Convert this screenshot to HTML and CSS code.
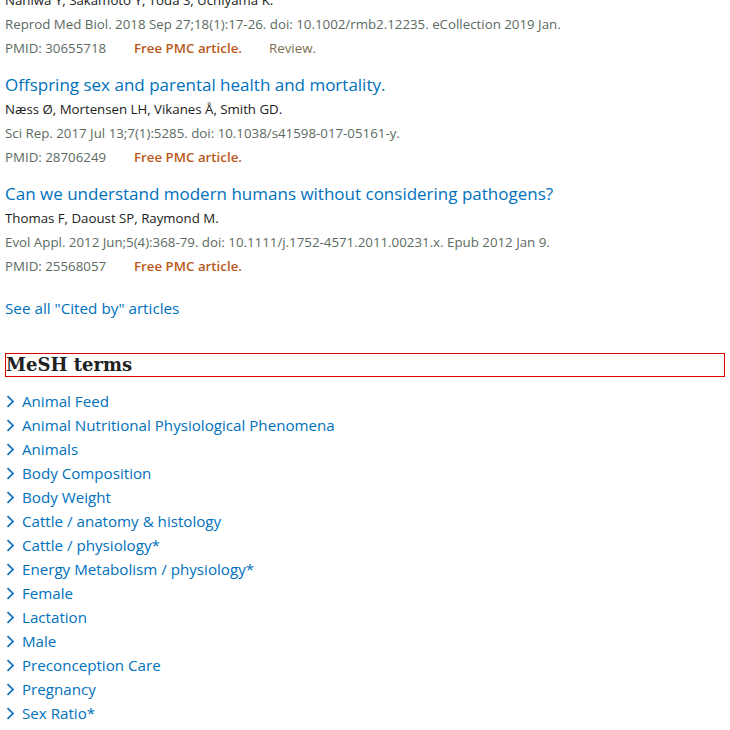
FILE: index.html
```html
<!DOCTYPE html>
<html lang="en">
<head>
<meta charset="utf-8">
<title>Cited by / MeSH terms</title>
<link rel="stylesheet" href="styles.css">
</head>
<body>
<div class="page">
  <section class="cited">
    <div class="article first">
      <div class="authors">Naniwa Y, Sakamoto Y, Toda S, Uchiyama K.</div>
      <div class="citation">Reprod Med Biol. 2018 Sep 27;18(1):17-26. doi: 10.1002/rmb2.12235. eCollection 2019 Jan.</div>
      <div class="meta"><span class="pmid">PMID: 30655718</span><span class="free">Free PMC article.</span><span class="ptype">Review.</span></div>
    </div>
    <div class="article">
      <a class="title" href="#">Offspring sex and parental health and mortality.</a>
      <div class="authors">Næss Ø, Mortensen LH, Vikanes Å, Smith GD.</div>
      <div class="citation">Sci Rep. 2017 Jul 13;7(1):5285. doi: 10.1038/s41598-017-05161-y.</div>
      <div class="meta"><span class="pmid">PMID: 28706249</span><span class="free">Free PMC article.</span></div>
    </div>
    <div class="article">
      <a class="title" href="#">Can we understand modern humans without considering pathogens?</a>
      <div class="authors">Thomas F, Daoust SP, Raymond M.</div>
      <div class="citation">Evol Appl. 2012 Jun;5(4):368-79. doi: 10.1111/j.1752-4571.2011.00231.x. Epub 2012 Jan 9.</div>
      <div class="meta"><span class="pmid">PMID: 25568057</span><span class="free">Free PMC article.</span></div>
    </div>
    <a class="see-all" href="#">See all "Cited by" articles</a>
  </section>
  <section class="mesh">
    <h2 class="mesh-heading">MeSH terms</h2>
    <ul class="mesh-list">
      <li><span class="chev"><svg width="9" height="13" viewBox="0 0 9 13"><path d="M1.5 1.2 L7 6.5 L1.5 11.8" fill="none" stroke="currentColor" stroke-width="1.7"/></svg></span><a href="#">Animal Feed</a></li>
      <li><span class="chev"><svg width="9" height="13" viewBox="0 0 9 13"><path d="M1.5 1.2 L7 6.5 L1.5 11.8" fill="none" stroke="currentColor" stroke-width="1.7"/></svg></span><a href="#">Animal Nutritional Physiological Phenomena</a></li>
      <li><span class="chev"><svg width="9" height="13" viewBox="0 0 9 13"><path d="M1.5 1.2 L7 6.5 L1.5 11.8" fill="none" stroke="currentColor" stroke-width="1.7"/></svg></span><a href="#">Animals</a></li>
      <li><span class="chev"><svg width="9" height="13" viewBox="0 0 9 13"><path d="M1.5 1.2 L7 6.5 L1.5 11.8" fill="none" stroke="currentColor" stroke-width="1.7"/></svg></span><a href="#">Body Composition</a></li>
      <li><span class="chev"><svg width="9" height="13" viewBox="0 0 9 13"><path d="M1.5 1.2 L7 6.5 L1.5 11.8" fill="none" stroke="currentColor" stroke-width="1.7"/></svg></span><a href="#">Body Weight</a></li>
      <li><span class="chev"><svg width="9" height="13" viewBox="0 0 9 13"><path d="M1.5 1.2 L7 6.5 L1.5 11.8" fill="none" stroke="currentColor" stroke-width="1.7"/></svg></span><a href="#">Cattle / anatomy &amp; histology</a></li>
      <li><span class="chev"><svg width="9" height="13" viewBox="0 0 9 13"><path d="M1.5 1.2 L7 6.5 L1.5 11.8" fill="none" stroke="currentColor" stroke-width="1.7"/></svg></span><a href="#">Cattle / physiology*</a></li>
      <li><span class="chev"><svg width="9" height="13" viewBox="0 0 9 13"><path d="M1.5 1.2 L7 6.5 L1.5 11.8" fill="none" stroke="currentColor" stroke-width="1.7"/></svg></span><a href="#">Energy Metabolism / physiology*</a></li>
      <li><span class="chev"><svg width="9" height="13" viewBox="0 0 9 13"><path d="M1.5 1.2 L7 6.5 L1.5 11.8" fill="none" stroke="currentColor" stroke-width="1.7"/></svg></span><a href="#">Female</a></li>
      <li><span class="chev"><svg width="9" height="13" viewBox="0 0 9 13"><path d="M1.5 1.2 L7 6.5 L1.5 11.8" fill="none" stroke="currentColor" stroke-width="1.7"/></svg></span><a href="#">Lactation</a></li>
      <li><span class="chev"><svg width="9" height="13" viewBox="0 0 9 13"><path d="M1.5 1.2 L7 6.5 L1.5 11.8" fill="none" stroke="currentColor" stroke-width="1.7"/></svg></span><a href="#">Male</a></li>
      <li><span class="chev"><svg width="9" height="13" viewBox="0 0 9 13"><path d="M1.5 1.2 L7 6.5 L1.5 11.8" fill="none" stroke="currentColor" stroke-width="1.7"/></svg></span><a href="#">Preconception Care</a></li>
      <li><span class="chev"><svg width="9" height="13" viewBox="0 0 9 13"><path d="M1.5 1.2 L7 6.5 L1.5 11.8" fill="none" stroke="currentColor" stroke-width="1.7"/></svg></span><a href="#">Pregnancy</a></li>
      <li><span class="chev"><svg width="9" height="13" viewBox="0 0 9 13"><path d="M1.5 1.2 L7 6.5 L1.5 11.8" fill="none" stroke="currentColor" stroke-width="1.7"/></svg></span><a href="#">Sex Ratio*</a></li>
    </ul>
  </section>
</div>
</body>
</html>
```

FILE: styles.css
```css
html, body {
  margin: 0;
  padding: 0;
  background: #fff;
  overflow: hidden;
}

.page {
  padding: 0 5px;
  font-family: "Open Sans", "Noto Sans", sans-serif;
  color: #212121;
}

a {
  text-decoration: none;
  color: #0071bc;
}

.cited {
  display: flex;
  flex-direction: column;
}

.article {
  display: flex;
  flex-direction: column;
  margin-top: 13px;
}

.article.first {
  margin-top: -12px;
}

.title {
  font-size: 17px;
  line-height: 24px;
  color: #0071bc;
}

.authors {
  font-size: 13.25px;
  line-height: 24px;
  color: #212121;
}

.citation,
.meta {
  font-size: 13.3px;
  line-height: 24px;
  color: #5b6b5f;
}

.meta {
  display: flex;
}

.pmid {
  width: 129px;
}

.free {
  color: #b9581a;
  font-weight: 600;
  width: 135px;
}

.ptype {
  color: #7b6e4e;
}

.see-all {
  margin-top: 18px;
  font-size: 15.25px;
  line-height: 24px;
  align-self: flex-start;
}

.mesh {
  margin-top: 33px;
}

.mesh-heading {
  margin: 0;
  border: 1px solid #e00000;
  font-family: "DejaVu Serif", "Liberation Serif", serif;
  font-weight: bold;
  font-size: 18px;
  line-height: 22px;
  color: #212121;
}

.mesh-list {
  list-style: none;
  margin: 12px 0 0;
  padding: 0;
}

.mesh-list li {
  display: flex;
  align-items: center;
  height: 24px;
  font-size: 15.15px;
}

.chev {
  display: flex;
  width: 16px;
  padding-left: 1px;
  color: #0b6fb8;
}
```
